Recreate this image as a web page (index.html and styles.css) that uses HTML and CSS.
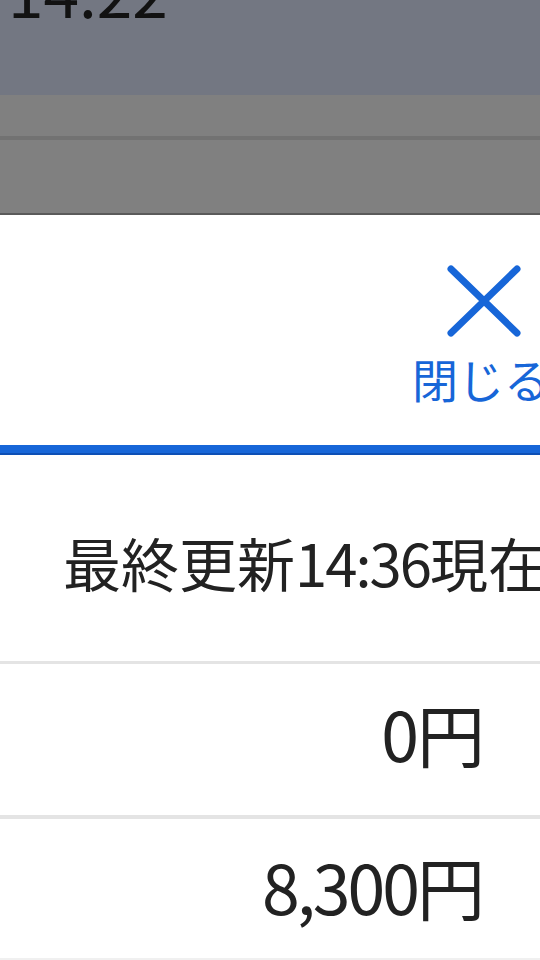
FILE: index.html
```html
<!DOCTYPE html>
<html lang="ja">
<head>
<meta charset="utf-8">
<link rel="stylesheet" href="styles.css">
</head>
<body>
<div class="backdrop">
  <div class="status"><span class="time">14:22</span></div>
  <div class="band"></div>
  <div class="band band-lower"></div>
</div>
<div class="sheet">
  <div class="sheet-head">
    <button class="close">
      <svg class="close-icon" viewBox="0 0 74 72" width="74" height="72">
        <path d="M4 4 L70 68 M70 4 L4 68" stroke="#1766d8" stroke-width="7" stroke-linecap="round" fill="none"/>
      </svg>
      <span class="close-label">閉じる</span>
    </button>
  </div>
  <div class="accent"></div>
  <div class="row row-updated">最終更新<span class="num">14:36</span>現在</div>
  <div class="row row-amount"><span class="num">0</span>円</div>
  <div class="row row-amount row-last"><span class="num num-tight">8,300</span>円</div>
</div>
</body>
</html>
```
FILE: styles.css
```css
html, body {
  margin: 0;
  padding: 0;
}
body {
  width: 540px;
  height: 960px;
  overflow: hidden;
  background: #ffffff;
  font-family: "Noto Sans CJK JP", "Noto Sans", sans-serif;
  color: #222222;
}
.backdrop {
  display: flex;
  flex-direction: column;
}
.status {
  height: 95px;
  background: #737782;
  overflow: hidden;
  padding-left: 8px;
}
.time {
  display: block;
  font-size: 64px;
  line-height: 1;
  margin-top: -42px;
  color: #121212;
}
.band {
  height: 41px;
  background: #808080;
  border-bottom: 4px solid #727272;
}
.band-lower {
  height: 73px;
  border-bottom: 2px solid #5a5a5a;
}
.sheet {
  display: flex;
  flex-direction: column;
}
.sheet-head {
  height: 230px;
  display: flex;
  justify-content: flex-end;
}
.close {
  width: 138px;
  margin-right: -13px;
  padding: 50px 0 0;
  border: 0;
  background: transparent;
  display: flex;
  flex-direction: column;
  align-items: center;
  font-family: inherit;
}
.close-icon {
  display: block;
}
.close-label {
  font-size: 46px;
  line-height: 1;
  margin-top: 18px;
  margin-left: -6px;
  color: #1766d8;
  white-space: nowrap;
}
.accent {
  height: 8px;
  background: #1766d8;
  border-bottom: 2px solid #0d4fb5;
}
.row {
  white-space: nowrap;
  overflow: hidden;
  border-bottom: 3px solid #e4e4e4;
  color: #222222;
}
.num {
  letter-spacing: -2px;
}
.num-tight {
  letter-spacing: -3px;
}
.row-updated {
  height: 209px;
  box-sizing: border-box;
  padding: 73px 0 0 63px;
  font-size: 58px;
  line-height: 1.2;
}
.row-amount {
  height: 155px;
  box-sizing: border-box;
  padding: 28px 55px 0 0;
  text-align: right;
  font-size: 68px;
  line-height: 1.2;
  border-bottom-width: 4px;
}
.row-last {
  height: 141px;
  padding-top: 26px;
  border-bottom: 2px solid #f0f0f0;
}
```
